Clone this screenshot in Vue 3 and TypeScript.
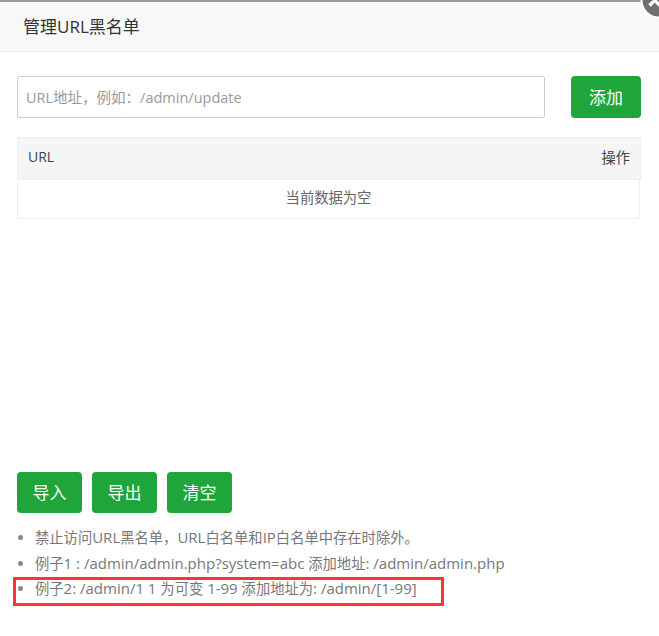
<script setup lang="ts">
const placeholder = 'URL地址\uFF0C例如\uFF1A/admin/update'
const tips: string[] = [
  '禁止访问URL黑名单\uFF0CURL白名单和IP白名单中存在时除外。',
  '例子1 : /admin/admin.php?system=abc 添加地址: /admin/admin.php',
  '例子2: /admin/1 1 为可变 1-99 添加地址为: /admin/[1-99]',
]
const actions: string[] = ['导入', '导出', '清空']

// Latin runs render a little larger than the CJK runs beside them.
function runs(text: string): { text: string; latin: boolean }[] {
  return text
    .split(/([\u4e00-\u9fff\uFF0C\u3002]+)/)
    .filter((part) => part.length > 0)
    .map((part) => ({ text: part, latin: !/[\u4e00-\u9fff\uFF0C\u3002]/.test(part) }))
}
</script>

<template>
  <div class="page">
    <div class="topline"></div>
    <header class="title">管理URL黑名单</header>
    <svg class="close" width="40" height="40" viewBox="0 0 40 40">
      <circle cx="20" cy="20" r="17.5" fill="#6f6f6f" stroke="#fff" stroke-width="2" />
      <path d="M10.5 19.5 L21 30 M21 19.5 L10.5 30" stroke="#fff" stroke-width="3.5" transform="translate(0 -4.5)" />
    </svg>
    <main class="body">
      <div class="add-row">
        <input class="url-input" type="text" :placeholder="placeholder" />
        <button class="btn add">添加</button>
      </div>
      <div class="table">
        <div class="thead">
          <span class="url">URL</span>
          <span>操作</span>
        </div>
        <div class="empty">当前数据为空</div>
      </div>
      <div class="actions">
        <button v-for="a in actions" :key="a" class="btn">{{ a }}</button>
      </div>
      <ul class="tips">
        <li v-for="t in tips" :key="t">
          <span v-for="(r, i) in runs(t)" :key="i" :class="{ latin: r.latin }">{{ r.text }}</span>
        </li>
      </ul>
    </main>
    <div class="annotation"></div>
  </div>
</template>

<style>
html, body { margin: 0; background: #fff; }
</style>

<style scoped>
.page {
  position: relative;
  width: 659px;
  height: 636px;
  overflow: hidden;
  background: #fff;
  font-family: "Open Sans", "Noto Sans CJK SC", sans-serif;
  color: #666;
}
.topline { height: 2px; background: #999; }
.title {
  box-sizing: border-box;
  height: 50px;
  padding-left: 23px;
  line-height: 49px;
  font-size: 17px;
  color: #333;
  background: #f8f8f8;
  border-bottom: 1px solid #eee;
}
.close { position: absolute; right: -20px; top: -20px; }
.body { padding: 24px 19px 0 17px; }
.add-row { display: flex; justify-content: space-between; }
.url-input {
  box-sizing: border-box;
  width: 528px;
  height: 42px;
  padding: 0 8px;
  border: 1px solid #ccc;
  border-radius: 2px;
  outline: none;
  font: inherit;
  font-size: 14.5px;
  color: #555;
}
.url-input::placeholder { color: #999; opacity: 1; }
.btn {
  box-sizing: border-box;
  width: 65px;
  height: 41px;
  padding: 0 0 2px;
  border: 0;
  border-radius: 4px;
  background: #20a53a;
  color: #fff;
  font: inherit;
  font-size: 17px;
}
.btn.add { width: 70px; height: 42px; margin-right: -1px; }
.table { margin-top: 19px; font-size: 14.3px; }
.thead {
  box-sizing: border-box;
  display: flex;
  justify-content: space-between;
  align-items: center;
  height: 43px;
  padding: 0 10px 4px 10px;
  margin-right: -1px;
  background: #f5f5f5;
  border: 1px solid #eee;
  color: #444;
}
.url { font-size: 14px; }
.empty {
  box-sizing: border-box;
  height: 39px;
  line-height: 36px;
  text-align: center;
  border: 1px solid #eee;
  border-top: 0;
  color: #666;
}
.actions { display: flex; gap: 10px; margin-top: 253px; }
.tips {
  margin: 12px 0 0;
  padding: 0 0 0 18px;
  font-size: 14.3px;
  color: #777;
}
.tips li { height: 25.5px; line-height: 25.5px; }
.tips li::marker { color: #888; }
.latin { font-size: 15px; }
.annotation {
  position: absolute;
  left: 13px;
  top: 577px;
  width: 431px;
  height: 29px;
  box-sizing: border-box;
  border: 3px solid #f33;
}
</style>
